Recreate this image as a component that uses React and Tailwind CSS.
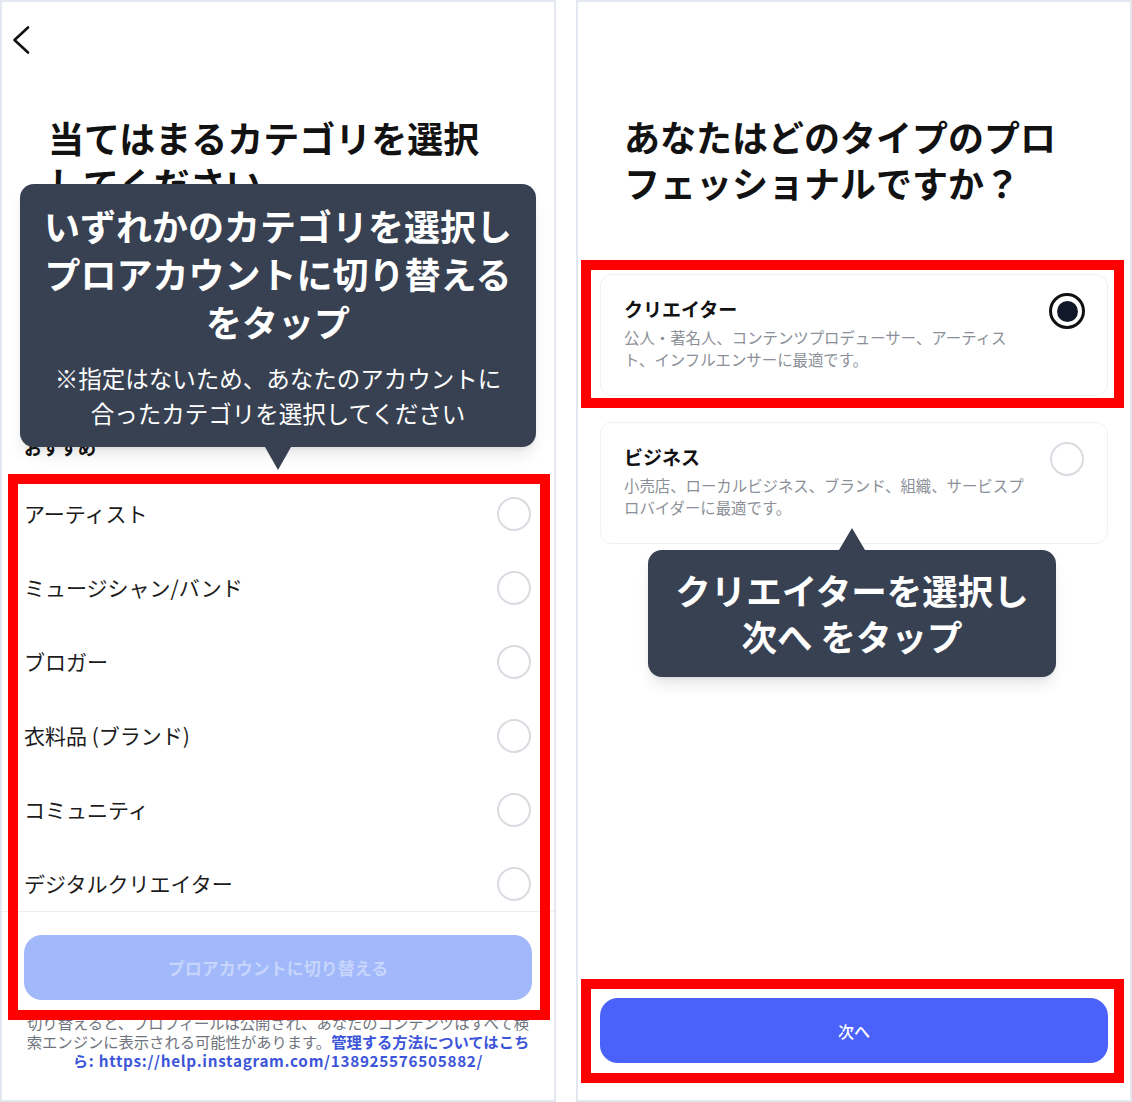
import React from 'react';

const categories = [
  'アーティスト',
  'ミュージシャン/バンド',
  'ブロガー',
  '衣料品 (ブランド)',
  'コミュニティ',
  'デジタルクリエイター',
];

function Radio({ checked }) {
  if (checked) {
    return (
      <div className="w-[36px] h-[36px] rounded-full border-[3px] border-[#111111] flex items-center justify-center shrink-0">
        <div className="w-[21px] h-[21px] rounded-full bg-[#111827]" />
      </div>
    );
  }
  return (
    <div className="w-[36px] h-[36px] flex items-center justify-center shrink-0">
      <div className="w-[34px] h-[34px] rounded-full border-2 border-[#d8dce1]" />
    </div>
  );
}

function TypeCard({ title, lines, checked }) {
  return (
    <div className="h-[122px] border border-[#f0f1f3] rounded-[12px] flex justify-between items-start pl-[23px] pr-[22px] pt-[18px]">
      <div>
        <div className="mt-[4px] text-[19px] leading-[24px] font-bold text-[#111111]">{title}</div>
        <div className="mt-[5px] text-[15.4px] leading-[22px] text-[#8b9098] whitespace-nowrap">
          {lines[0]}
          <br />
          {lines[1]}
        </div>
      </div>
      <Radio checked={checked} />
    </div>
  );
}

export default function App() {
  return (
    <div className="w-[1132px] h-[1102px] bg-white flex gap-[20px] font-['Noto_Sans_CJK_JP','Noto_Sans',sans-serif]">
      {/* Left: category select */}
      <div className="relative w-[556px] h-[1102px] border-2 border-[#e3e8f0] flex flex-col overflow-hidden">
        <div className="pt-[23px] pl-[9px]">
          <svg width="20" height="31" viewBox="0 0 20 31" fill="none">
            <path d="M17 2.5 L3.5 15 L17 27.5" stroke="#111" strokeWidth="2.6" strokeLinecap="round" strokeLinejoin="round" />
          </svg>
        </div>
        <h1 className="mt-[58px] pl-[46px] text-[36px] leading-[46px] font-bold text-[#121212] whitespace-nowrap">
          当てはまるカテゴリを選択
          <br />
          してください
        </h1>
        <div className="mt-[229px] pl-[22px] text-[18px] leading-[24px] font-bold text-[#111111]">おすすめ</div>
        <div className="mt-[28px] flex flex-col gap-[20px]">
          {categories.map((c) => (
            <div key={c} className="h-[54px] flex items-center justify-between pl-[22px] pr-[22px]">
              <span className="text-[21px] text-[#1c1c1c]">{c}</span>
              <Radio />
            </div>
          ))}
        </div>
        <div className="h-px bg-[#eeeeee]" />
        <div className="mt-[23px] mx-[22px] h-[65px] rounded-[18px] bg-[#a1b9fa] flex items-center justify-center text-[17px] font-bold text-[#c7d5fc]">
          プロアカウントに切り替える
        </div>
        <p className="mt-[13px] px-[10px] text-center text-[15.3px] leading-[19px] text-[#70757d] whitespace-nowrap">
          切り替えると、プロフィールは公開され、あなたのコンテンツはすべて検
          <br />
          索エンジンに表示される可能性があります。<span className="font-bold text-[#3d55d8]">管理する方法についてはこち</span>
          <br />
          <span className="font-bold text-[#3d55d8] tracking-[0.7px]">ら: https://help.instagram.com/138925576505882/</span>
        </p>

        {/* tooltip */}
        <div className="absolute left-[18px] top-[182px] w-[516px] h-[263px] rounded-[14px] bg-[#374151] shadow-lg text-white text-center pt-[17px]">
          <div className="text-[36px] leading-[48px] font-bold whitespace-nowrap">
            いずれかのカテゴリを選択し
            <br />
            プロアカウントに切り替える
            <br />
            をタップ
          </div>
          <div className="mt-[16px] text-[23.5px] leading-[35px] whitespace-nowrap">
            ※指定はないため、あなたのアカウントに
            <br />
            合ったカテゴリを選択してください
          </div>
          <div className="absolute top-full left-[245px] w-0 h-0 border-l-[13px] border-r-[13px] border-t-[23px] border-l-transparent border-r-transparent border-t-[#374151]" />
        </div>

        {/* highlight */}
        <div className="absolute left-[6px] top-[472px] w-[542px] h-[546px] border-[10px] border-[#ff0000]" />
      </div>

      {/* Right: professional type */}
      <div className="relative w-[556px] h-[1102px] border-2 border-[#e3e8f0] flex flex-col overflow-hidden">
        <h1 className="pt-[111px] pl-[46px] text-[36px] leading-[46px] font-bold text-[#121212] whitespace-nowrap">
          あなたはどのタイプのプロ
          <br />
          フェッショナルですか？
        </h1>
        <div className="mt-[69px] mx-[22px] flex flex-col gap-[26px]">
          <TypeCard
            title="クリエイター"
            lines={['公人・著名人、コンテンツプロデューサー、アーティス', 'ト、インフルエンサーに最適です。']}
            checked
          />
          <TypeCard
            title="ビジネス"
            lines={['小売店、ローカルビジネス、ブランド、組織、サービスプ', 'ロバイダーに最適です。']}
          />
        </div>
        <div className="mt-auto mb-[37px] mx-[22px] h-[65px] rounded-[18px] bg-[#4b62fa] flex items-center justify-center text-[16px] font-medium text-white">
          次へ
        </div>

        {/* tooltip */}
        <div className="absolute left-[70px] top-[548px] w-[408px] h-[127px] rounded-[14px] bg-[#374151] shadow-lg text-white text-center pt-[17px]">
          <div className="absolute bottom-full left-[191px] w-0 h-0 border-l-[13px] border-r-[13px] border-b-[22px] border-l-transparent border-r-transparent border-b-[#374151]" />
          <div className="text-[35.5px] leading-[46px] font-bold whitespace-nowrap">
            クリエイターを選択し
            <br />
            次へ をタップ
          </div>
        </div>

        {/* highlights */}
        <div className="absolute left-[3px] top-[258px] w-[543px] h-[148px] border-[10px] border-[#ff0000]" />
        <div className="absolute left-[3px] top-[977px] w-[543px] h-[104px] border-[10px] border-[#ff0000]" />
      </div>
    </div>
  );
}
